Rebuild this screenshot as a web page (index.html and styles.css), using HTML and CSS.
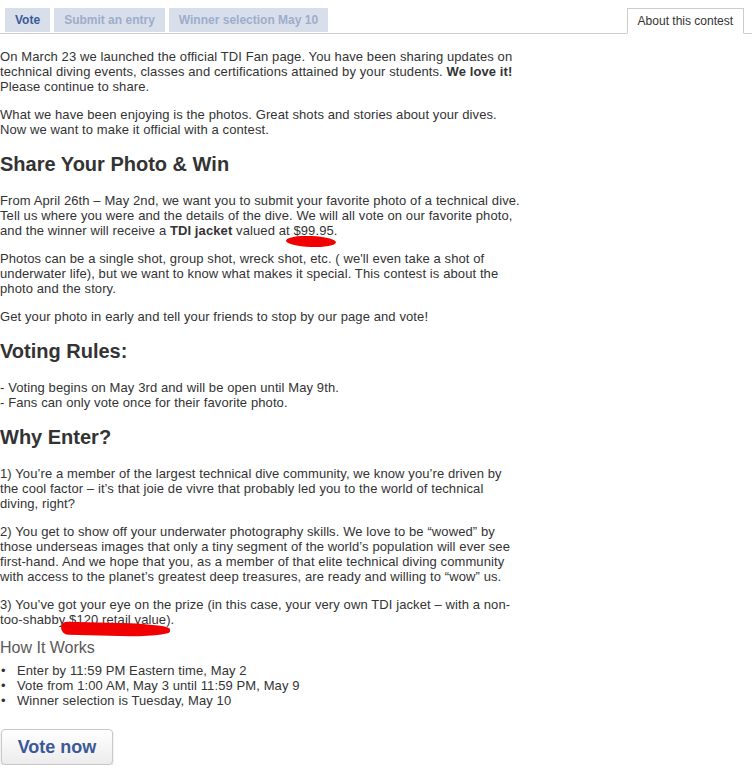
FILE: index.html
```
<!DOCTYPE html>
<html lang="en">
  <head>
    <meta charset="UTF-8" />
    <meta name="viewport" content="width=device-width, initial-scale=1.0" />
    <title>TDI Photo Contest</title>
    <link rel="stylesheet" href="styles.css">
  </head>
  <body>
    <!-- tabs -->
    <div class="tabs">
      <a class="tab active" href="#">Vote</a>
      <a class="tab" href="#">Submit an entry</a>
      <a class="tab" href="#">Winner selection May 10</a>
      <a class="tab about" href="#">About this contest</a>
    </div>

    <div class="content">
      <p>On March 23 we launched the official TDI Fan page. You have been sharing updates on technical diving events, classes and certifications attained by your students. <b>We love it!</b> Please continue to share.</p>
      <p>What we have been enjoying is the photos. Great shots and stories about your dives. Now we want to make it official with a contest.</p>

      <h2>Share Your Photo &amp; Win</h2>
      <p>From April 26th – May 2nd, we want you to submit your favorite photo of a technical dive. Tell us where you were and the details of the dive. We will all vote on our favorite photo, and the winner will receive a <b>TDI jacket</b> valued at <span class="mark mark-1">$99.95</span>.</p>
      <p>Photos can be a single shot, group shot, wreck shot, etc. ( we'll even take a shot of underwater life), but we want to know what makes it special. This contest is about the photo and the story.</p>
      <p>Get your photo in early and tell your friends to stop by our page and vote!</p>

      <h2>Voting Rules:</h2>
      <p>- Voting begins on May 3rd and will be open until May 9th.<br>- Fans can only vote once for their favorite photo.</p>

      <h2>Why Enter?</h2>
      <p>1) You’re a member of the largest technical dive community, we know you’re driven by the cool factor – it’s that joie de vivre that probably led you to the world of technical diving, right?</p>
      <p>2) You get to show off your underwater photography skills. We love to be “wowed” by those underseas images that only a tiny segment of the world’s population will ever see first-hand. And we hope that you, as a member of that elite technical diving community with access to the planet’s greatest deep treasures, are ready and willing to “wow” us.</p>
      <p class="last">3) You’ve got your eye on the prize (in this case, your very own TDI jacket – with a non-too-shabby <span class="mark mark-2">$120 retail value</span>).</p>

      <h3>How It Works</h3>
      <ul class="steps">
        <li>Enter by 11:59 PM Eastern time, May 2</li>
        <li>Vote from 1:00 AM, May 3 until 11:59 PM, May 9</li>
        <li>Winner selection is Tuesday, May 10</li>
      </ul>

      <button type="button" class="vote-btn">Vote now</button>
    </div>
  </body>
</html>
```

FILE: styles.css
```
body {
  margin: 0;
  padding: 0;
  font-family: "Liberation Sans", Arial, sans-serif;
  font-size: 13px;
  line-height: 15px;
  color: #333;
  background-color: #fff;
}

/* tabs */
.tabs {
  display: flex;
  gap: 4px;
  padding: 8px 8px 0 5px;
  border-bottom: 1px solid #ccc;
}

.tab {
  display: block;
  height: 24px;
  line-height: 24px;
  padding: 0 10px;
  background-color: #d8dfea;
  color: #9eadcc;
  font-size: 12px;
  font-weight: bold;
  text-decoration: none;
}

.tab.active {
  color: #3b5998;
}

.tab.about {
  margin-left: auto;
  margin-bottom: -1px;
  padding: 0 10px;
  background-color: #fff;
  border: 1px solid #ccc;
  border-bottom: 1px solid #fff;
  color: #333;
  font-weight: normal;
}

/* content */
.content {
  width: 520px;
  padding-top: 15px;
  letter-spacing: 0.1px;
}

.content p {
  margin: 0 0 13px;
}

.content p.last {
  margin-bottom: 0;
}

.content h2 {
  margin: 15px 0 17px;
  font-size: 20px;
  line-height: 24px;
  font-weight: bold;
  letter-spacing: 0;
  color: #333;
}

.content h3 {
  margin: 11px 0 5px;
  font-size: 16px;
  line-height: 20px;
  font-weight: normal;
  letter-spacing: 0;
  color: #5a5a5a;
}

.steps {
  margin: 0;
  padding: 0;
  list-style: none;
}

.steps li::before {
  content: "•";
  display: inline-block;
  width: 17px;
  text-indent: 1px;
}

/* red scribbles */
.mark {
  position: relative;
}

.mark::after {
  content: "";
  position: absolute;
  background-color: #f00000;
  border-radius: 50%;
}

.mark-1::after {
  left: -7px;
  top: 13px;
  width: 50px;
  height: 11px;
  transform: rotate(2deg);
}

.mark-2::after {
  left: -8px;
  top: 11px;
  width: 109px;
  height: 13px;
  border-radius: 6px 40% 50% 8px;
  transform: rotate(1.5deg);
}

/* button */
.vote-btn {
  display: block;
  margin: 21px 0 0 1px;
  width: 112px;
  height: 36px;
  padding: 0;
  font-family: "Liberation Sans", Arial, sans-serif;
  font-size: 18px;
  font-weight: bold;
  color: #3b5998;
  background: linear-gradient(#ffffff, #ececec);
  border: 1px solid #c8c8c8;
  border-radius: 4px;
  box-shadow: 0 1px 2px rgba(0, 0, 0, 0.2);
  cursor: pointer;
}
```
